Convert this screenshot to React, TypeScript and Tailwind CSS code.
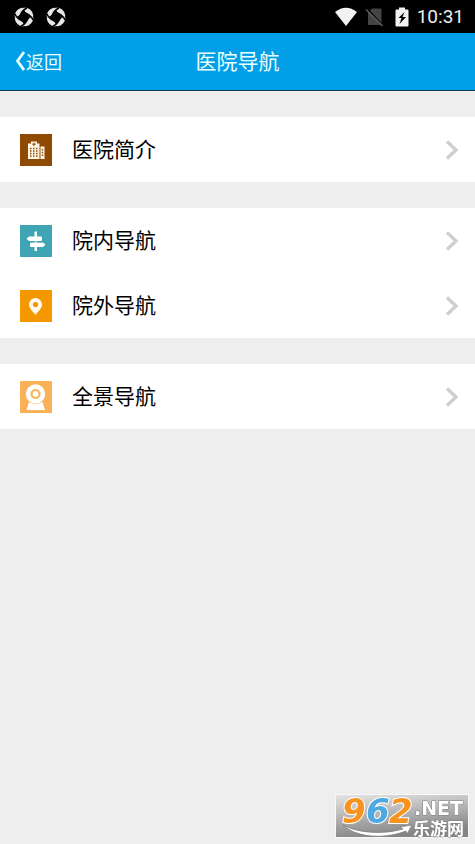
import type { ReactNode } from 'react';

const BuildingIcon = () => (
  <svg viewBox="0 0 32 32" className="h-8 w-8 bg-[#8f4a04]" aria-hidden="true">
    <path d="M8 25V9.500h3V7.500h6v2h2.500V25zM20.500 25V12.500h4V25z" fill="#fff6e6" />
    <path d="M14 8.500v3.500M12.200 10.200h3.600" stroke="#8f4a04" strokeWidth="1" />
    <path
      d="M10 14.500h8M10 17h8M10 19.500h8M10 22h8"
      stroke="#8f4a04"
      strokeWidth="1.300"
      strokeDasharray="1.500 1.500"
    />
    <path d="M22.500 15v8" stroke="#8f4a04" strokeWidth="1.400" strokeDasharray="1.500 1.200" />
  </svg>
);

const SignpostIcon = () => (
  <svg viewBox="0 0 32 32" className="h-8 w-8 bg-[#3fa5b5]" aria-hidden="true">
    <path d="M14.500 6.500h2.500V26h-2.500z" fill="#fff" />
    <path d="M6.500 13.700L9 11.500h12q1 0 1 1v2.500q0 1-1 1H9z" fill="#fff" />
    <path d="M25.500 19.700L23 17.500H11q-1 0-1 1v2.500q0 1 1 1h12z" fill="#fff" />
    <path d="M9 16.800h14" stroke="#3fa5b5" strokeWidth="1" />
  </svg>
);

const PinIcon = () => (
  <svg viewBox="0 0 32 32" className="h-8 w-8 bg-[#f39800]" aria-hidden="true">
    <path
      d="M15.500 25c-2-3-6.500-6.500-6.500-10.500a6.500 6.500 0 0 1 13 0c0 4-4.500 7.500-6.500 10.500z"
      fill="#fff9ee"
    />
    <circle cx="15.500" cy="14.500" r="2.600" fill="#f39800" />
  </svg>
);

const CameraIcon = () => (
  <svg viewBox="0 0 32 32" className="h-8 w-8 bg-[#fbb158]" aria-hidden="true">
    <path d="M9 21h13.500l2.500 8H6.500z" fill="#fff" />
    <circle cx="15.500" cy="13" r="10.200" fill="#fbb158" />
    <circle cx="15.500" cy="13" r="9.700" fill="#fff" />
    <circle cx="15.500" cy="13" r="4" fill="none" stroke="#fbb158" strokeWidth="2.200" />
  </svg>
);

const petal = 'M0.600 9A9.500 9.500 0 0 1 8 0.800Q10.500 0.500 10 2C9 3.500 7.500 4 6.500 6C5.500 8 4.500 9.500 2.500 10Q0.600 10.300 0.600 9z';

const SwirlIcon = () => (
  <svg viewBox="0 0 20 20" className="h-5 w-5" fill="#e6e6e6" aria-hidden="true">
    <path d={petal} />
    <path d={petal} transform="rotate(90 10 10)" />
    <path d={petal} transform="rotate(180 10 10)" />
    <path d={petal} transform="rotate(270 10 10)" />
    {/* dark gaps between the petals */}
    <path
      d="M7 7.500Q9 2.500 13 1M12.500 7Q17.500 9 19 13M13 12.500Q11 17.500 7 19M7.500 13Q2.500 11 1 7"
      fill="none"
      stroke="#000"
      strokeWidth="1.500"
    />
  </svg>
);

const StatusBar = () => (
  <div className="flex h-[33px] items-center justify-between bg-black pr-[11px] pl-[14px]">
    <div className="flex gap-3">
      <SwirlIcon />
      <SwirlIcon />
    </div>
    <div className="flex items-center">
      <svg viewBox="0 0 24 20" className="mr-2 h-5 w-6" aria-hidden="true">
        <path d="M2 5Q13-3.500 24 5L13 19z" fill="#f2f2f2" />
      </svg>
      <svg viewBox="0 0 18 20" className="mr-3 h-5 w-[18px]" aria-hidden="true">
        <path d="M7 1.500h8.500q1 0 1 1V18H3V6z" fill="#444" />
        <path d="M2 2l16 17" stroke="#000" strokeWidth="2" />
        <path d="M1 2.500L17.500 19" stroke="#666" strokeWidth="1.300" />
      </svg>
      <svg viewBox="0 0 14 20" className="mr-2 h-5 w-[14px]" aria-hidden="true">
        <path d="M4 0.500h6v2h2.500q1 0 1 1V18.500q0 1-1 1h-11q-1 0-1-1V3.500q0-1 1-1H4z" fill="#f2f2f2" />
        <path d="M9.500 5L3.500 11h3L4.500 17l6.500-7H7.500z" fill="#000" />
      </svg>
      <span className="font-['Roboto',sans-serif] text-[19px] leading-6 text-[#ececec]">10:31</span>
    </div>
  </div>
);

const Header = () => (
  <header className="grid h-[58px] grid-cols-[1fr_auto_1fr] items-center border-b border-[#123a50] bg-[#009fe8] pb-px text-[#eaffff]">
    <a href="#" className="flex items-center pl-[14px] text-lg">
      <svg viewBox="0 0 12 20" className="h-5 w-3" aria-hidden="true">
        <path d="M10 1L3.500 10l6.500 9" fill="none" stroke="#eaffff" strokeWidth="2.800" />
      </svg>
      返回
    </a>
    <h1 className="text-[21px]">医院导航</h1>
  </header>
);

const NavRow = ({ icon, label }: { icon: ReactNode; label: string }) => (
  <li>
    <a href="#" className="flex h-[65px] items-center bg-white pr-4 pl-5">
      {icon}
      <span className="ml-5 flex-1 pb-0.5 text-[21px] text-black">{label}</span>
      <svg viewBox="0 0 14 20" className="h-5 w-[14px]" aria-hidden="true">
        <path d="M2 1.500L11 10l-9 8.500" fill="none" stroke="#cfcfcf" strokeWidth="3.400" />
      </svg>
    </a>
  </li>
);

const SiteLogo = () => (
  <svg
    viewBox="0 0 134 44"
    className="fixed right-[6px] bottom-[6px] h-11 w-[134px] overflow-visible"
    role="img"
    aria-label="962.NET 乐游网"
  >
    <defs>
      <linearGradient id="plate" x1="0" y1="0" x2="0.300" y2="1">
        <stop offset="0" stopColor="#e4e4e4" />
        <stop offset="1" stopColor="#858585" />
      </linearGradient>
    </defs>
    <path d="M0 0h134v44H0z" fill="#f8f8f8" />
    <path d="M1 1h132v42H1z" fill="url(#plate)" />
    <path
      d="M8 31C22 39 48 41 68 35l-3-2 12-2-5 9-1-3C48 46 20 43 8 31z"
      fill="#fff"
      stroke="#777"
      strokeWidth="0.700"
    />
    <g
      className="font-['DejaVu_Sans',sans-serif] text-[34px] font-bold italic"
      stroke="#fff"
      strokeWidth="2"
      paintOrder="stroke"
    >
      <text x="7" y="29" fill="#f7931e">9</text>
      <text x="31" y="29" fill="#4fa8e0">6</text>
      <text x="54" y="29" fill="#f7931e">2</text>
    </g>
    <g fill="#fff" stroke="#808080" strokeWidth="1" paintOrder="stroke">
      <text x="79" y="21" className="font-['DejaVu_Sans',sans-serif] text-[19px] font-bold">.NET</text>
      <text x="78" y="41" className="font-['Noto_Sans_CJK_SC',sans-serif] text-[17px] font-bold">乐游网</text>
    </g>
  </svg>
);

export default function App() {
  return (
    <div className="min-h-screen bg-[#eeeeee] font-['Noto_Sans_CJK_SC',sans-serif]">
      <StatusBar />
      <Header />
      <nav className="flex flex-col gap-[26px] pt-[26px]">
        <ul>
          <NavRow icon={<BuildingIcon />} label="医院简介" />
        </ul>
        <ul>
          <NavRow icon={<SignpostIcon />} label="院内导航" />
          <NavRow icon={<PinIcon />} label="院外导航" />
        </ul>
        <ul>
          <NavRow icon={<CameraIcon />} label="全景导航" />
        </ul>
      </nav>
      <SiteLogo />
    </div>
  );
}
